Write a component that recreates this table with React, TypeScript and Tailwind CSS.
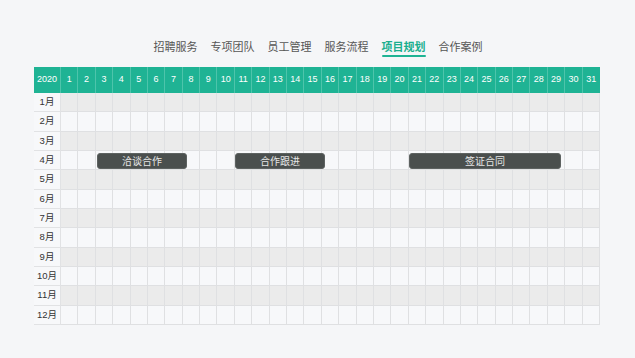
import React from "react";

const tabs = ["招聘服务", "专项团队", "员工管理", "服务流程", "项目规划", "合作案例"];
const days = Array.from({ length: 31 }, (_, i) => i + 1);
const months = Array.from({ length: 12 }, (_, i) => `${i + 1}月`);

const bars = [
  { label: "洽谈合作", left: 63, width: 90 },
  { label: "合作跟进", left: 201, width: 90 },
  { label: "签证合同", left: 375, width: 152 },
];

export default function App() {
  return (
    <div
      className="w-[635px] h-[358px] bg-[#f5f6f8] overflow-hidden"
      style={{ fontFamily: '"Liberation Sans", "Noto Sans CJK SC", sans-serif' }}
    >
      <div className="flex justify-center gap-[13px] pt-[39px] h-[67px] pl-[1px]">
        {tabs.map((t, i) => (
          <div key={t} className="flex flex-col items-stretch">
            <span
              className={
                "text-[11px] leading-[16px] " +
                (i === 4 ? "text-[#1aaf8e] font-bold" : "text-[#555555]")
              }
            >
              {t}
            </span>
            {i === 4 && <div className="h-[2px] bg-[#1fb394] rounded-full" />}
          </div>
        ))}
      </div>

      <div className="ml-[34px] w-[566px] relative">
        <div className="grid grid-cols-[27px_repeat(31,1fr)]">
          <div className="h-[26px] bg-[#1fb394] flex items-center justify-center text-white text-[9px] border-r border-[#4ec4ab]">
            2020
          </div>
          {days.map((d) => (
            <div
              key={d}
              className={
                "h-[26px] bg-[#1fb394] flex items-center justify-center text-white text-[9px] " +
                (d < 31 ? "border-r border-[#4ec4ab]" : "")
              }
            >
              {d}
            </div>
          ))}
          {months.map((m, r) => (
            <React.Fragment key={m}>
              <div className="h-[19.33px] bg-[#f7f8fa] flex items-center justify-center text-[#333333] text-[9.5px] border-r border-b border-[#e1e2e4]">
                {m}
              </div>
              {days.map((d) => (
                <div
                  key={d}
                  className={
                    "h-[19.33px] border-r border-b border-[#dfe0e2] " +
                    (r % 2 === 0 ? "bg-[#ebebeb]" : "bg-[#f7f8fa]")
                  }
                />
              ))}
            </React.Fragment>
          ))}
        </div>
        {bars.map((b) => (
          <div
            key={b.label}
            className="absolute top-[86px] h-[16px] rounded-[3px] bg-[#4a4f4e] flex items-center justify-center text-[#e6e6e6] text-[10px] border border-[#5d6261]"
            style={{ left: b.left, width: b.width }}
          >
            {b.label}
          </div>
        ))}
      </div>
    </div>
  );
}
